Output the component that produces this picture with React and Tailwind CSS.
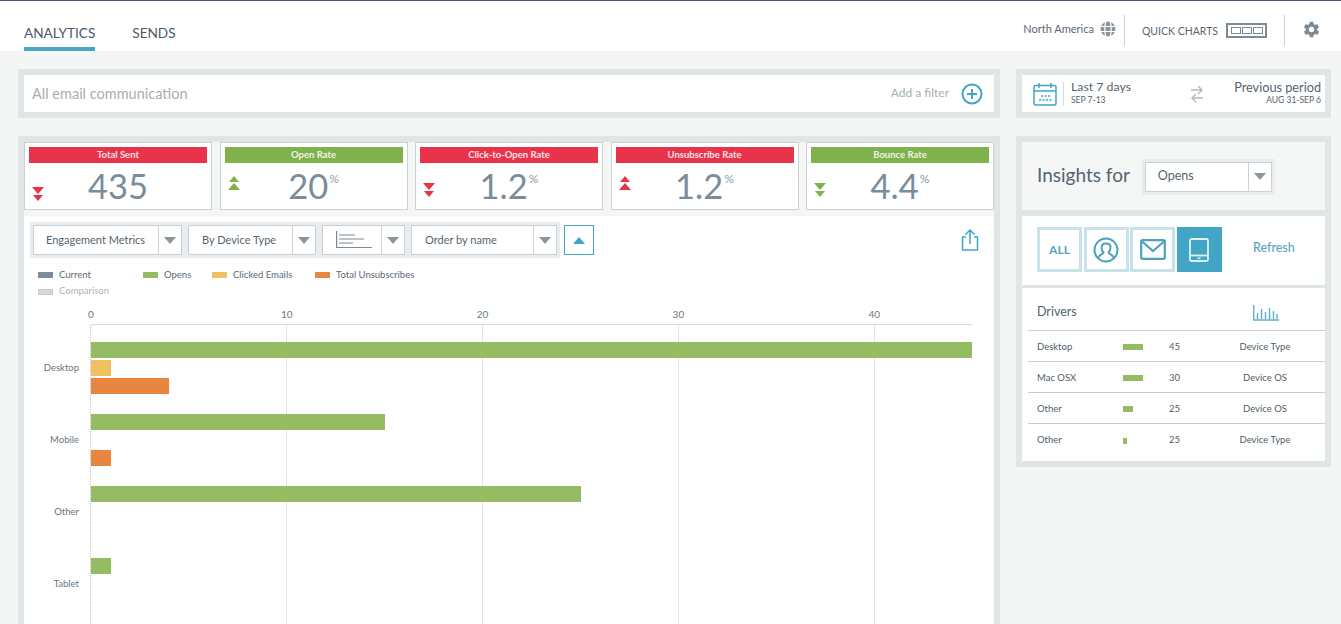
import React from 'react';
import { IoSettingsSharp } from 'react-icons/io5';

const kpis = [
  { title: 'Total Sent', value: '435', good: false, up: false, arrowMb: 'mb-[8px]' },
  { title: 'Open Rate', value: '20', pct: true, good: true, up: true, arrowMb: 'mb-[19px]' },
  { title: 'Click-to-Open Rate', value: '1.2', pct: true, good: false, up: false, arrowMb: 'mb-[12px]' },
  { title: 'Unsubscribe Rate', value: '1.2', pct: true, good: false, up: true, arrowMb: 'mb-[19px]' },
  { title: 'Bounce Rate', value: '4.4', pct: true, good: true, up: false, arrowMb: 'mb-[12px]' },
];

const chartRows = [
  { label: 'Desktop', opens: 45, clicked: 1, unsub: 4 },
  { label: 'Mobile', opens: 15, clicked: 0, unsub: 1 },
  { label: 'Other', opens: 25, clicked: 0, unsub: 0 },
  { label: 'Tablet', opens: 1, clicked: 0, unsub: 0 },
];

const drivers = [
  { name: 'Desktop', bar: 20, value: 45, type: 'Device Type' },
  { name: 'Mac OSX', bar: 20, value: 30, type: 'Device OS' },
  { name: 'Other', bar: 10, value: 25, type: 'Device OS' },
  { name: 'Other', bar: 4, value: 25, type: 'Device Type' },
];

const UNIT = 19.58;

const Caret = ({ up, color = '#8a979f' }) => (
  <svg width="12" height="7" viewBox="0 0 12 7">
    <path d={up ? 'M6 0 L12 7 L0 7 Z' : 'M0 0 L12 0 L6 7 Z'} fill={color} />
  </svg>
);

const DoubleArrow = ({ up, color }) => (
  <svg width="12" height="14" viewBox="0 0 12 14" className="block">
    {up ? (
      <path d="M6 0 L11 6 L1 6 Z M6 7 L12 14 L0 14 Z" fill={color} />
    ) : (
      <path d="M0 0 L12 0 L6 7 Z M1 8 L11 8 L6 14 Z" fill={color} />
    )}
  </svg>
);

const Select = ({ className, children }) => (
  <div className={`flex h-[30px] items-center bg-white border border-[#c9d1d5] ${className}`}>
    <div className="flex-1 min-w-0 text-[11px] text-[#55636e] whitespace-nowrap">{children}</div>
    <div className="flex h-[28px] w-[23px] items-center justify-center border-l border-[#c9d1d5] shrink-0">
      <Caret />
    </div>
  </div>
);

const Kpi = ({ title, value, pct, good, up, arrowMb }) => {
  const color = good ? '#7fb24a' : '#e8334a';
  return (
    <div className="w-[188px] h-[68px] bg-white border border-[#c9d1d5] px-[4px] pt-[4px] flex flex-col">
      <div
        className={`h-[16px] text-center text-[9.5px] leading-[15px] font-bold text-white/85 ${good ? 'bg-[#7fb24a]' : 'bg-[#e8334a]'}`}
      >
        {title}
      </div>
      <div className="flex-1 grid grid-cols-[1fr_auto_1fr] items-end">
        <div className={`pl-[1px] ${arrowMb}`}>
          <div className="ml-[2px]">
            <DoubleArrow up={up} color={color} />
          </div>
        </div>
        <div className="flex items-start text-[34.5px] leading-[44px] font-normal text-[#7a8c99] pb-[1px]">
          {value}
          {pct && <span className="mt-[8px] ml-[1px] text-[12px] leading-[14px] text-[#8a9aa5]">%</span>}
        </div>
        <div />
      </div>
    </div>
  );
};

const LegendItem = ({ swatch, label, muted, className }) => (
  <div className={`flex items-center gap-[6px] ${className}`}>
    <span className={`block h-[6px] w-[15px] ${swatch}`} />
    <span className={`text-[9.5px] ${muted ? 'text-[#a9b4ba]' : 'text-[#5b6a75]'}`}>{label}</span>
  </div>
);

const Bar = ({ value, color }) => (
  <div className="h-[16px]">
    {value > 0 && <div className={`h-full ${color}`} style={{ width: value * UNIT }} />}
  </div>
);

const Chart = () => (
  <div className="mt-[7px]">
    <div className="flex h-[18px] text-[10px] text-[#6b7984] pl-[67px]">
      {[0, 10, 20, 30, 40].map((tick) => (
        <div key={tick} className="w-[195.8px] shrink-0">
          <span className="inline-block -translate-x-1/2 leading-[16px]">{tick}</span>
        </div>
      ))}
    </div>
    <div className="relative ml-[67px] w-[881px] border-t border-[#d4d9dc] pt-[17px] h-[330px]">
      <div className="absolute inset-y-0 left-[-1px] border-l border-dotted border-[#b9c1c6]" />
      {[1, 2, 3, 4].map((i) => (
        <div
          key={i}
          className="absolute inset-y-0 border-l border-[#e3e6e8]"
          style={{ left: i * 10 * UNIT - 0.5 }}
        />
      ))}
      <div className="relative flex flex-col gap-[20px]">
        {chartRows.map((row) => (
          <div key={row.label} className="relative flex flex-col gap-[2px]">
            <span className="absolute right-full top-[18px] mr-[12px] text-[9.5px] leading-[16px] text-[#67757f]">
              {row.label}
            </span>
            <Bar value={row.opens} color="bg-[#95bb63]" />
            <Bar value={row.clicked} color="bg-[#efc160]" />
            <Bar value={row.unsub} color="bg-[#e78541]" />
          </div>
        ))}
      </div>
    </div>
  </div>
);

const IconBox = ({ active, children }) => (
  <div
    className={`flex h-[45px] w-[45px] items-center justify-center border-[3px] ${
      active ? 'bg-[#42a5c6] border-[#42a5c6]' : 'bg-white border-[#c6e3ea]'
    }`}
  >
    {children}
  </div>
);

export default function App() {
  return (
    <div className="h-screen overflow-hidden bg-[#f4f5f5] font-['Lato','Open_Sans',sans-serif]">
      {/* Header */}
      <div className="h-[51px] bg-white border-t border-[#55507a] flex justify-between pl-[24px] pr-[21px]">
        <div className="flex gap-[37px] text-[13.6px] text-[#4a5a68]">
          <div className="h-[50px] pt-[23px] border-b-[4px] border-[#4ba5c0] leading-[18px]">ANALYTICS</div>
          <div className="pt-[23px] leading-[18px]">SENDS</div>
        </div>
        <div className="flex items-start pt-[14px] text-[#5b6873]">
          <span className="text-[11px] leading-[28px]">North America</span>
          <svg width="16" height="16" viewBox="0 0 16 16" fill="none" className="ml-[6px] mt-[6px]">
            <circle cx="8" cy="8" r="7.5" fill="#8a969e" />
            <path
              d="M0 5.5h16M0 10.5h16M5.8 0C4.6 5 4.6 11 5.8 16M10.2 0c1.2 5 1.2 11 0 16"
              stroke="#fff"
              strokeWidth="1.2"
            />
          </svg>
          <div className="ml-[8px] h-[31px] border-l border-[#ccd2d6]" />
          <span className="ml-[17px] mt-[2px] text-[10.5px] leading-[28px]">QUICK CHARTS</span>
          <div className="ml-[8px] mt-[8px] h-[15px] w-[41px] border-2 border-[#7d8a93] flex items-center justify-center gap-[1px]">
            <span className="block h-[7px] w-[10px] border border-[#7d8a93]" />
            <span className="block h-[7px] w-[10px] border border-[#7d8a93]" />
            <span className="block h-[7px] w-[10px] border border-[#7d8a93]" />
          </div>
          <div className="ml-[17px] h-[31px] border-l border-[#ccd2d6]" />
          <IoSettingsSharp className="ml-[18px] mt-[6px] text-[#7d8a93]" size={17} />
        </div>
      </div>

      <div className="grid grid-cols-[982px_315px] gap-x-[16px] gap-y-[18px] pl-[18px] pt-[18px]">
        {/* Filter */}
        <div className="h-[49px] border-[6px] border-[#e0e5e7] bg-white flex items-center justify-between pl-[8px] pr-[11px]">
          <span className="text-[14.5px] leading-[20px] text-[#a6afb5]">All email communication</span>
          <div className="flex items-center gap-[12px]">
            <span className="text-[12px] mb-[1px] text-[#a6afb5]">Add a filter</span>
            <svg width="22" height="22" viewBox="0 0 22 22" fill="none" stroke="#42a5c6" strokeWidth="2">
              <circle cx="11" cy="11" r="9.5" />
              <path d="M11 6v10M6 11h10" />
            </svg>
          </div>
        </div>

        {/* Date range */}
        <div className="h-[49px] border-[6px] border-[#e0e5e7] bg-white flex items-center pl-[11px] pr-[4px]">
          <svg width="24" height="24" viewBox="0 0 24 24" fill="none" stroke="#42a5c6" strokeWidth="1.5" className="shrink-0">
            <rect x="1" y="3.5" width="22" height="19.5" rx="1.5" />
            <path d="M1 9h22M6 1v5M18 1v5" />
            <path d="M8 14h2M11.5 14h2M15 14h2M6 18h2M9.5 18h2M13 18h2M16.5 18h2" />
          </svg>
          <div className="ml-[6px] h-[24px] border-l border-[#d5dadd]" />
          <div className="ml-[7px] flex flex-col mb-[2px]">
            <span className="text-[12.3px] leading-[14px] text-[#55636e]">Last 7 days</span>
            <span className="text-[8.5px] leading-[12px] text-[#55636e]">SEP 7-13</span>
          </div>
          <svg width="14" height="18" viewBox="0 0 14 18" fill="none" stroke="#b3bcc1" strokeWidth="1.5" className="ml-[59px]">
            <path d="M1 5h11M8 1l4 4-4 4M13 13H2M6 9l-4 4 4 4" />
          </svg>
          <div className="ml-auto flex flex-col items-end mb-[2px]">
            <span className="text-[12.7px] leading-[14px] text-[#55636e]">Previous period</span>
            <span className="text-[8.5px] leading-[12px] text-[#55636e]">AUG 31-SEP 6</span>
          </div>
        </div>

        {/* Main column */}
        <div className="border-[6px] border-b-0 border-[#e0e5e7] h-[500px]">
          <div className="flex justify-between">
            {kpis.map((kpi) => (
              <Kpi key={kpi.title} {...kpi} />
            ))}
          </div>
          <div className="mt-[6px] bg-white h-[420px] overflow-hidden">
            <div className="flex items-start pt-[6px] pl-[6px] pr-[15px]">
              <div className="flex gap-[6px] bg-[#e8ecee] p-[3px]">
                <Select className="w-[149px] pl-[12px]">Engagement Metrics</Select>
                <Select className="w-[128px] pl-[13px]">By Device Type</Select>
                <Select className="w-[83px] pl-[13px]">
                  <svg width="36" height="18" viewBox="0 0 36 18" fill="none" stroke="#7d8a93" strokeWidth="1.2" className="block">
                    <path d="M0.6 0v16.5H36M3 4h16M3 8h25M3 12h14" />
                  </svg>
                </Select>
                <Select className="w-[146px] pl-[13px]">Order by name</Select>
              </div>
              <div className="ml-[4px] mt-[3px] flex h-[30px] w-[30px] items-center justify-center border border-[#42a5c6]">
                <Caret up color="#42a5c6" />
              </div>
              <svg width="18" height="22" viewBox="0 0 18 22" fill="none" stroke="#42a5c6" strokeWidth="1.5" className="ml-auto mt-[7px]">
                <path d="M5 8H1.5v13h15V8H13M9 15V1M4.5 5.5L9 1l4.5 4.5" />
              </svg>
            </div>
            <div className="mt-[9px] flex pl-[14px] h-[16px] items-center">
              <LegendItem swatch="bg-[#7b8d9c]" label="Current" className="w-[105px]" />
              <LegendItem swatch="bg-[#95bb63]" label="Opens" className="w-[69px]" />
              <LegendItem swatch="bg-[#efc160]" label="Clicked Emails" className="w-[103px]" />
              <LegendItem swatch="bg-[#e78541]" label="Total Unsubscribes" />
            </div>
            <div className="flex pl-[14px] h-[17px] items-center">
              <LegendItem swatch="bg-[#d4dadd] border border-[#c3cbcf]" label="Comparison" muted />
            </div>
            <div className="-mt-[1px]">
              <Chart />
            </div>
          </div>
        </div>

        {/* Insights column */}
        <div className="border-[6px] border-[#e0e5e7] h-[331px] flex flex-col bg-[#e0e5e7]">
          <div className="h-[68px] bg-[#f5f7f7] flex items-center pl-[15px]">
            <span className="text-[19px] mb-[2px] text-[#55636e]">Insights for</span>
            <div className="ml-[12px] mt-[1px] bg-[#e8ecee] p-[3px]">
              <Select className="w-[127px] pl-[12px]">
                <span className="text-[12.5px]">Opens</span>
              </Select>
            </div>
          </div>
          <div className="mt-[6px] h-[69px] bg-white flex items-center pl-[15px] pb-[2px]">
            <div className="flex gap-[1.67px]">
              <IconBox>
                <span className="text-[12px] font-bold text-[#5aa5bd]">ALL</span>
              </IconBox>
              <IconBox>
                <svg width="26" height="26" viewBox="0 0 26 26" fill="none" stroke="#4ba2bd" strokeWidth="2">
                  <circle cx="13" cy="13" r="11.5" />
                  <path d="M5 21c1-3.5 5-3.5 5.5-5.5-1.5-1.5-2-3-2-5 0-2.5 2-4 4.5-4s4.5 1.5 4.5 4c0 2-.5 3.5-2 5 .5 2 4.5 2 5.5 5.5" />
                </svg>
              </IconBox>
              <IconBox>
                <svg width="26" height="21" viewBox="0 0 26 21" fill="none" stroke="#4ba2bd" strokeWidth="2.2">
                  <rect x="1.2" y="1.2" width="23.6" height="18.6" rx="1.5" />
                  <path d="M1.5 2L13 12 24.5 2" />
                </svg>
              </IconBox>
              <IconBox active>
                <svg width="20" height="24" viewBox="0 0 20 24" fill="none" stroke="#dff1f6" strokeWidth="1.8">
                  <rect x="1" y="1" width="18" height="22" rx="1.5" />
                  <path d="M1 17.5h18" />
                  <rect x="8.5" y="19.5" width="3" height="1.5" fill="#dff1f6" stroke="none" />
                </svg>
              </IconBox>
            </div>
            <span className="ml-[31px] mb-[2px] text-[12.5px] font-medium text-[#5aa5bd]">Refresh</span>
          </div>
          <div className="mt-[3px] flex-1 bg-white pl-[6px]">
            <div className="h-[43px] flex items-center justify-between pl-[9px] pr-[46px] pt-[7px] border-b border-[#c9ced1]">
              <span className="text-[12.5px] text-[#55636e]">Drivers</span>
              <svg width="26" height="16" viewBox="0 0 26 16" fill="none" stroke="#5fb0c8" strokeWidth="1.4">
                <path d="M0.7 0v15H26M4.5 14V8M8.5 14V4M12.5 14V7M16.5 14V3M20.5 14V6M24 14V9" />
              </svg>
            </div>
            {drivers.map((row, i) => (
              <div
                key={i}
                className={`h-[31px] flex items-center pl-[9px] pt-[2px] text-[9.5px] text-[#4f5d68] ${i < 3 ? 'border-b border-[#c9ced1]' : ''}`}
              >
                <span className="w-[86px] shrink-0">{row.name}</span>
                <span className="w-[46px] shrink-0">
                  <span className="block h-[6px] bg-[#95bb63]" style={{ width: row.bar }} />
                </span>
                <span className="w-[36px] shrink-0">{row.value}</span>
                <span className="w-[120px] shrink-0 text-center">{row.type}</span>
              </div>
            ))}
          </div>
        </div>
      </div>
    </div>
  );
}
